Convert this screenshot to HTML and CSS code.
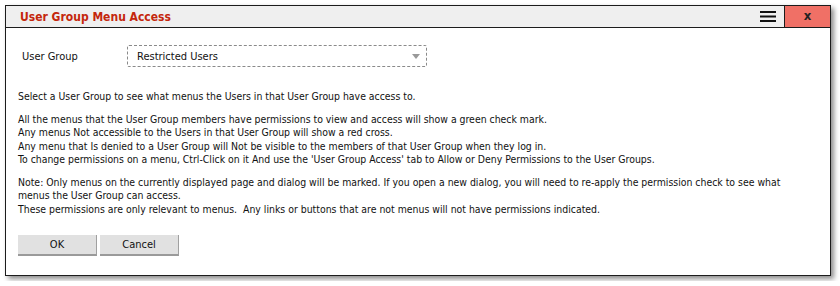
FILE: index.html
```html
<!DOCTYPE html>
<html lang="en">
<head>
  <meta charset="UTF-8" />
  <title>User Group Menu Access</title>
  <link rel="stylesheet" href="styles.css">
</head>
<body>
  <div class="dialog">
    <div class="titlebar">
      <span class="title">User Group Menu Access</span>
      <span class="menu-btn">
        <svg width="16" height="11" viewBox="0 0 16 11"><rect x="0" y="0" width="16" height="2" fill="#111"/><rect x="0" y="4.5" width="16" height="2" fill="#111"/><rect x="0" y="9" width="16" height="2" fill="#111"/></svg>
      </span>
      <span class="close-btn">x</span>
    </div>

    <div class="content">
      <div class="field">
        <label class="field-label">User Group</label>
        <div class="select">
          <span>Restricted Users</span>
          <span class="arrow"></span>
        </div>
      </div>

      <p>Select a User Group to see what menus the Users in that User Group have access to.</p>

      <p>All the menus that the User Group members have permissions to view and access will show a green check mark.<br>
      Any menus Not accessible to the Users in that User Group will show a red cross.<br>
      Any menu that Is denied to a User Group will Not be visible to the members of that User Group when they log in.<br>
      To change permissions on a menu, Ctrl-Click on it And use the 'User Group Access' tab to Allow or Deny Permissions to the User Groups.</p>

      <p>Note: Only menus on the currently displayed page and dialog will be marked. If you open a new dialog, you will need to re-apply the permission check to see what menus the User Group can access.<br>
      These permissions are only relevant to menus.&nbsp; Any links or buttons that are not menus will not have permissions indicated.</p>

      <div class="buttons">
        <button type="button">OK</button>
        <button type="button">Cancel</button>
      </div>
    </div>
  </div>
</body>
</html>
```

FILE: styles.css
```css
body {
  margin: 0;
  padding: 5px;
  background: #fff;
  font-family: "DejaVu Sans Condensed", "DejaVu Sans", sans-serif;
  font-size: 10.4px;
  color: #111;
}

.dialog {
  width: 824px;
  height: 269px;
  border: 1px solid #1c1c1c;
  background: #fff;
  box-shadow: 3px 3px 5px rgba(0, 0, 0, 0.45);
}

.titlebar {
  display: flex;
  align-items: stretch;
  height: 21px;
  background: #efefef;
  border-bottom: 1px solid #1c1c1c;
}

.title {
  flex: 1;
  padding-left: 14px;
  line-height: 22px;
  font-size: 12px;
  font-weight: bold;
  color: #c4260c;
}

.menu-btn {
  width: 32px;
  padding-right: 8px;
  display: flex;
  align-items: center;
  justify-content: flex-end;
  border-right: 1px solid #1c1c1c;
}

.close-btn {
  width: 45px;
  background: #f07066;
  color: #222;
  font-weight: bold;
  font-size: 13px;
  text-align: center;
  line-height: 19px;
}

.content {
  padding: 17px 28px 0 12px;
}

.field {
  display: flex;
  align-items: center;
  margin-bottom: 23px;
}

.field-label {
  width: 105px;
  padding-left: 4px;
  font-size: 11px;
}

.select {
  width: 283px;
  height: 20px;
  padding: 0 6px 0 9px;
  border: 1px dashed #8a8a8a;
  border-radius: 2px;
  display: flex;
  align-items: center;
  justify-content: space-between;
  font-size: 11px;
}

.arrow {
  width: 0;
  height: 0;
  border-left: 4px solid transparent;
  border-right: 4px solid transparent;
  border-top: 5px solid #999;
}

p {
  margin: 0 0 9px 0;
  line-height: 13.5px;
}

.buttons {
  display: flex;
  gap: 3px;
  margin-top: 19px;
}

button {
  width: 79px;
  height: 21px;
  font-family: inherit;
  font-size: 11px;
  color: #111;
  background: #e1e1e1;
  border: none;
  border-right: 1px solid #a0a0a0;
  border-bottom: 2px solid #9a9a9a;
  padding: 0;
}
```
